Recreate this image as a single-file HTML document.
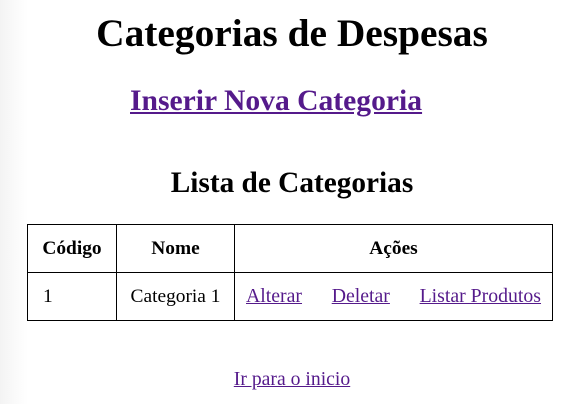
<!DOCTYPE html>
<html><head><meta charset="utf-8"><style>
html,body{margin:0;width:584px;height:404px;overflow:hidden;background:#fff;font-family:"Liberation Serif",serif;}
body{background:linear-gradient(to right,#f3f3f3 0,#fafafa 15px,#fff 28px);}
.a{position:absolute;white-space:nowrap;}
h1{position:absolute;left:0;width:584px;text-align:center;margin:0;top:10px;font-size:39.4px;line-height:46px;}
a{color:#551a8b;text-decoration:underline;}
table{position:absolute;left:27px;top:224px;width:526px;border-collapse:collapse;font-size:19.4px;}
td,th{border:1px solid #000;height:47px;padding:0;}
th{text-align:center;}
</style></head><body>
<h1>Categorias de Despesas</h1>
<div class="a" style="left:130px;top:83px;font-size:29.6px;font-weight:bold;line-height:36px;"><a>Inserir Nova Categoria</a></div>
<div class="a" style="left:0;width:584px;text-align:center;top:165px;font-size:29.3px;font-weight:bold;line-height:36px;">Lista de Categorias</div>
<table>
<tr><th style="width:88px">Código</th><th style="width:117px">Nome</th><th>Ações</th></tr>
<tr><td style="padding-left:15px">1</td><td style="text-align:center">Categoria 1</td><td style="padding-left:11px;font-size:19.8px"><a>Alterar</a>&nbsp;&nbsp;&nbsp;&nbsp;&nbsp;&nbsp;<a>Deletar</a>&nbsp;&nbsp;&nbsp;&nbsp;&nbsp;&nbsp;<a>Listar Produtos</a></td></tr>
</table>
<div class="a" style="left:0;width:584px;text-align:center;top:367px;font-size:19.7px;line-height:24px;"><a>Ir para o inicio</a></div>
</body></html>
